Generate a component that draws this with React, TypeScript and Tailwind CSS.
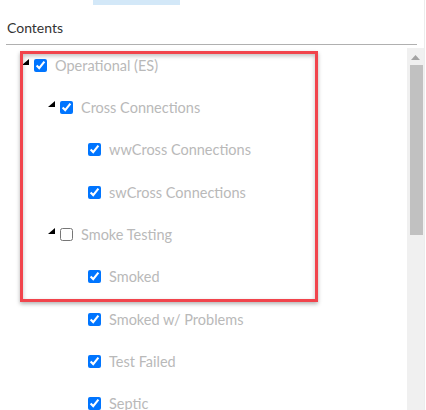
import React from "react";

type Row = {
  label: string;
  checked: boolean;
  expander: boolean;
  left: number; // x of first element (triangle or checkbox)
};

const rows: Row[] = [
  { label: "Operational (ES)", checked: true, expander: true, left: 22 },
  { label: "Cross Connections", checked: true, expander: true, left: 48 },
  { label: "wwCross Connections", checked: true, expander: false, left: 88 },
  { label: "swCross Connections", checked: true, expander: false, left: 88 },
  { label: "Smoke Testing", checked: false, expander: true, left: 48 },
  { label: "Smoked", checked: true, expander: false, left: 88 },
  { label: "Smoked w/ Problems", checked: true, expander: false, left: 88 },
  { label: "Test Failed", checked: true, expander: false, left: 88 },
  { label: "Septic", checked: true, expander: false, left: 88 },
];

function Triangle() {
  return (
    <svg width="7" height="6" viewBox="0 0 7 6" className="block shrink-0 self-start">
      <polygon points="7,0 7,6 0,6" fill="#000" />
    </svg>
  );
}

export default function App() {
  return (
    <div className="relative w-[426px] h-[410px] overflow-hidden bg-white font-['Lato','Open_Sans',sans-serif]">
      <div className="w-[425px] h-[410px] border-r border-[#ececec] flex flex-col">
        <div className="ml-[93px] w-[87px] h-[5px] bg-[#d3e8f8] shrink-0" />
        <div className="pl-[7px] pt-[14px] h-[39px] text-[14px] leading-[17px] text-[#333]">
          Contents
        </div>
        <div className="ml-[6px] w-[411px] h-[1px] bg-[#b0b0b0] shrink-0" />
        <div className="flex flex-1 min-h-0">
          <div className="flex-1 pt-[13.5px]">
            {rows.map((r) => (
              <div
                key={r.label}
                className="h-[42.35px] flex items-start"
                style={{ paddingLeft: r.left }}
              >
                <div className="flex items-center h-[13px]">
                  {r.expander && (
                    <div className="mr-[5px] h-[13px] flex">
                      <Triangle />
                    </div>
                  )}
                  <input
                    type="checkbox"
                    readOnly
                    checked={r.checked}
                    className="w-[13px] h-[13px] m-0 shrink-0"
                  />
                  <span className="ml-[8px] text-[14.5px] leading-[15px] text-[#b9b9b9] whitespace-nowrap">
                    {r.label}
                  </span>
                </div>
              </div>
            ))}
          </div>
          <div className="w-[17px] mt-[3px] bg-[#f0f0f0] flex flex-col items-center shrink-0">
            <svg width="9" height="5" viewBox="0 0 9 5" className="mt-[7px] block">
              <polygon points="4.5,0 9,5 0,5" fill="#a3a3a3" />
            </svg>
            <div className="mt-[5px] ml-[2px] w-[13px] h-[170px] bg-[#c1c1c1]" />
          </div>
        </div>
      </div>
      <div className="absolute left-[20px] top-[51px] w-[298px] h-[251px] border-[3px] border-[#f1444c] shadow-[0_2px_4px_rgba(0,0,0,0.3),inset_0_2px_4px_rgba(0,0,0,0.25)] pointer-events-none" />
    </div>
  );
}
